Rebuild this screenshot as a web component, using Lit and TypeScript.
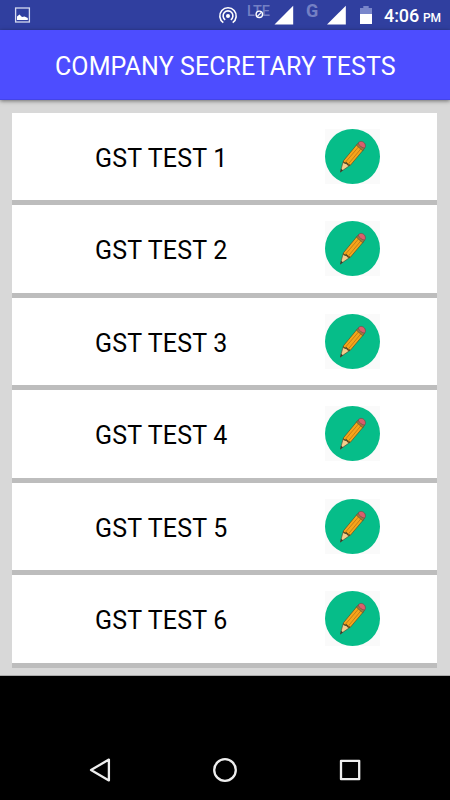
import { LitElement, html, css } from "lit";
import { customElement } from "lit/decorators.js";

@customElement("status-bar")
class StatusBar extends LitElement {
  static styles = css`
    :host { display: block; height: 30px; flex: none; background: #303f9f; }
    .bar { display: flex; height: 30px; }
    svg { display: block; flex: none; }
    .time {
      margin-left: 8px; color: #fff; white-space: nowrap;
      font: 500 18px/32px Roboto, sans-serif; letter-spacing: -0.1px;
    }
    .pm { font-size: 12px; margin-left: 4px; }
    .net { font: 500 15px Roboto, sans-serif; fill: #7480c4; }
    .net.bold { font-size: 18px; font-weight: 700; }
  `;
  render() {
    return html`<div class="bar">
      <svg width="376" height="30" viewBox="0 0 376 30">
        <rect x="15.6" y="8" width="13.8" height="14" fill="none" stroke="#d5d9f0" stroke-width="1.3" />
        <path d="M17 20V16.5L19.5 14.6L22 17L24.5 16.4L27.8 18V20Z" fill="#fff" />
        <g fill="none" stroke="#fff" stroke-width="1.6">
          <path d="M223.3 22.7A8.2 8.2 0 1 1 232.7 22.7" />
          <path d="M225.2 19.8A4.9 4.9 0 1 1 230.8 19.8" />
        </g>
        <circle cx="228" cy="16" r="2" fill="#fff" />
        <text class="net" x="247" y="16" textLength="23" lengthAdjust="spacingAndGlyphs">LTE</text>
        <circle cx="259.3" cy="14.3" r="3.2" fill="#303f9f" stroke="#fff" stroke-width="1.4" />
        <path d="M257.3 16.3L261.3 12.3" stroke="#fff" stroke-width="1.2" />
        <path d="M274.5 24.6L293.2 5.8V24.6Z" fill="#fff" />
        <text class="net bold" x="306" y="17">G</text>
        <path d="M327 24.6L345.8 5.8V24.6Z" fill="#fff" />
        <path d="M360 14V8H363.3V6H368.7V8H372V14Z" fill="#7986cb" />
        <rect x="360" y="14" width="12" height="10" fill="#fff" />
      </svg>
      <span class="time">4:06<span class="pm">PM</span></span>
    </div>`;
  }
}

@customElement("pencil-badge")
class PencilBadge extends LitElement {
  static styles = css`
    :host { display: block; width: 55px; height: 55px; background: #fafafa; }
    svg { display: block; }
  `;
  render() {
    return html`<svg width="55" height="55" viewBox="0 0 55 55">
      <circle cx="27.5" cy="27.5" r="27.5" fill="#06bd89" />
      <g stroke-linejoin="round">
        <path d="M15.4 43L18.1 32.8L24.6 36.6Z" fill="#f3cd8c" stroke="#4b402b" stroke-width=".6" />
        <path d="M18.3 32L32 15.4L38.4 20.8L25.4 36.2L22.6 36.2L21.6 33.8L18.7 34Z" fill="#f6a51b" stroke="#5a4220" stroke-width=".6" />
        <path d="M20.6 33L34.2 17.2M23.3 35L36.4 19.2" stroke="#ba7414" stroke-width=".8" fill="none" />
        <path d="M18.4 32.8L20 34.3L21.9 33.8L23 36L25.1 36" stroke="#44361c" stroke-width=".9" fill="none" />
        <path d="M31.3 16.2L33.3 13.9L39.5 19.4L37.6 21.7Z" fill="#9a7a44" stroke="#5a4220" stroke-width=".5" />
        <path d="M33.2 14L34.3 12.9C36.6 11.4 40.8 13.4 40.4 17.6L39.5 19.2C37.4 18.7 33.8 16.8 33.2 14Z" fill="#d95f6c" stroke="#71423f" stroke-width=".6" />
        <path d="M15.2 43.4L16 39.8L18 41.2Z" fill="#333c2c" />
      </g>
    </svg>`;
  }
}

@customElement("test-row")
class TestRow extends LitElement {
  static properties = { label: { type: String } };
  declare label: string;
  static styles = css`
    :host {
      display: flex; box-sizing: border-box; height: 92.5px; flex: none;
      background: #fff; border-bottom: 5px solid #bdbdbd;
    }
    .label {
      width: 230px; padding-left: 82.6px;
      font: 400 25px/91px Roboto, sans-serif; letter-spacing: 0.18px;
      color: #000; white-space: nowrap;
    }
    pencil-badge { margin-top: 16px; }
  `;
  render() {
    return html`<span class="label">${this.label}</span><pencil-badge></pencil-badge>`;
  }
}

@customElement("nav-bar")
class NavBar extends LitElement {
  static styles = css`
    :host { display: flex; flex: 1; background: #000; align-items: flex-end; }
    svg { display: block; }
  `;
  render() {
    return html`<svg width="450" height="60" viewBox="0 0 450 60">
      <g fill="none" stroke="#eee" stroke-width="2.3" stroke-linejoin="round">
        <path d="M91 30L108.9 19.6V40.4Z" />
        <circle cx="225" cy="30" r="10.8" />
        <rect x="341" y="20.8" width="18.2" height="18.4" />
      </g>
    </svg>`;
  }
}

@customElement("app-root")
class AppRoot extends LitElement {
  static styles = css`
    :host { display: flex; flex-direction: column; width: 450px; height: 800px; overflow: hidden; background: #000; }
    .title {
      height: 70px; box-sizing: border-box; flex: none; padding-left: 55px;
      background: #4d4dff; border-bottom: 1px solid #4444e8; color: #fff;
      font: 400 25px/73px Roboto, sans-serif; letter-spacing: 0.08px; white-space: nowrap;
      box-shadow: 0 1px 4px rgba(0, 0, 0, .5); z-index: 1;
    }
    .list {
      height: 575.5px; box-sizing: border-box; flex: none; padding: 12.5px 12.6px 0 12.4px;
      background: #d8d8d8; display: flex; flex-direction: column;
      border-bottom: 1px solid #aaa;
    }
  `;
  render() {
    return html`<status-bar></status-bar>
      <div class="title">COMPANY SECRETARY TESTS</div>
      <div class="list">
        ${[1, 2, 3, 4, 5, 6].map((n) => html`<test-row .label=${`GST TEST ${n}`}></test-row>`)}
      </div>
      <nav-bar></nav-bar>`;
  }
}
